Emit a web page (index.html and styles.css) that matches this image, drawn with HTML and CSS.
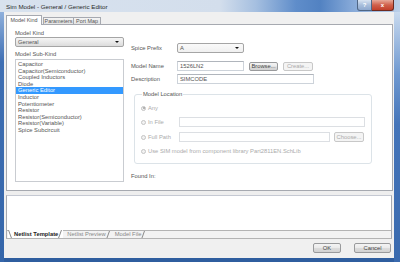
FILE: index.html
```html
<!DOCTYPE html>
<html lang="en">
<head>
    <meta charset="UTF-8">
    <meta name="viewport" content="width=device-width, initial-scale=1.0">
    <title>Sim Model - General / Generic Editor</title>
    <link rel="stylesheet" href="styles.css">
</head>
<body>
    <div class="window">
        <div class="titlebar">
            <span class="title">Sim Model - General / Generic Editor</span>
            <div class="caption">
                <span class="cap-help">?</span>
                <span class="cap-close">x</span>
            </div>
        </div>
        <div class="frame">
            <div class="client">
                <div class="tabs">
                    <span class="tab active">Model Kind</span>
                    <span class="tab tab-params">Parameters</span>
                    <span class="tab tab-ports">Port Map</span>
                </div>
                <div class="tab-panel">
                    <div class="kind-col">
                        <div class="label">Model Kind</div>
                        <div class="combo combo-kind"><span>General</span><span class="arrow"></span></div>
                        <div class="label sub-label">Model Sub-Kind</div>
                        <ul class="listbox">
                            <li>Capacitor</li>
                            <li>Capacitor(Semiconductor)</li>
                            <li>Coupled Inductors</li>
                            <li>Diode</li>
                            <li class="selected">Generic Editor</li>
                            <li>Inductor</li>
                            <li>Potentiometer</li>
                            <li>Resistor</li>
                            <li>Resistor(Semiconductor)</li>
                            <li>Resistor(Variable)</li>
                            <li>Spice Subcircuit</li>
                        </ul>
                    </div>
                    <div class="form-col">
                        <div class="row">
                            <span class="row-label">Spice Prefix</span>
                            <div class="combo combo-prefix"><span>A</span><span class="arrow"></span></div>
                        </div>
                        <div class="row row-name">
                            <span class="row-label">Model Name</span>
                            <div class="edit edit-name">1526LN2</div>
                            <div class="btn btn-browse">Browse...</div>
                            <div class="btn btn-create disabled">Create...</div>
                        </div>
                        <div class="row row-desc">
                            <span class="row-label">Description</span>
                            <div class="edit edit-desc">SIMCODE</div>
                        </div>
                        <fieldset class="group">
                            <legend>Model Location</legend>
                            <div class="opt opt-any"><span class="radio checked"></span>Any</div>
                            <div class="opt opt-file">
                                <span class="radio"></span><span class="opt-label">In File</span>
                                <div class="edit edit-off edit-grow"></div>
                            </div>
                            <div class="opt opt-path">
                                <span class="radio"></span><span class="opt-label">Full Path</span>
                                <div class="edit edit-off edit-grow"></div>
                                <div class="btn btn-choose disabled">Choose...</div>
                            </div>
                            <div class="opt opt-lib"><span class="radio"></span>Use SIM model from component library Part2811EN.SchLib</div>
                        </fieldset>
                        <div class="found">Found In:</div>
                    </div>
                </div>
                <div class="splitter"></div>
                <div class="netlist-panel">
                    <div class="netlist-area"></div>
                    <div class="sheet-tabs">
                        <span class="sheet-tab active">Netlist Template</span>
                        <span class="sheet-tab">Netlist Preview</span>
                        <span class="sheet-tab">Model File</span>
                    </div>
                </div>
                <div class="footer">
                    <div class="btn btn-ok">OK</div>
                    <div class="btn btn-cancel">Cancel</div>
                </div>
            </div>
        </div>
    </div>
</body>
</html>
```

FILE: styles.css
```css
body {
    margin: 0;
    font-family: "Liberation Sans", Arial, sans-serif;
    font-size: 5.8px;
    color: #555;
    background: #fff;
}
.window {
    width: 400px;
    height: 262px;
    display: flex;
    flex-direction: column;
    overflow: hidden;
}
.titlebar {
    height: 12px;
    display: flex;
    align-items: flex-start;
    background: linear-gradient(90deg, #d8e2ee 0%, #d3deec 55%, #a5bfe0 64%, #5f8dca 74%, #5282c2 80%, #86a9d8 88%, #bcd0e9 100%);
}
.title {
    margin: 3px 0 0 6px;
    line-height: 8px;
    font-size: 6.2px;
    color: #2a2a2a;
}
.caption {
    margin-left: auto;
    margin-right: 6px;
    display: flex;
    height: 11px;
}
.caption span {
    display: flex;
    align-items: center;
    justify-content: center;
    color: #fff;
    font-weight: bold;
    font-size: 6px;
    border: 1px solid #4f6685;
    border-top: none;
    box-sizing: border-box;
}
.cap-help {
    width: 15px;
    background: linear-gradient(#d9e4f2, #a9bfdc 50%, #8ea9cf);
    border-radius: 0 0 0 3px;
}
.cap-close {
    width: 22px;
    background: linear-gradient(#e7a999, #d0604c 50%, #c2402b);
    border-color: #6e2a20 !important;
    border-left: none !important;
    border-radius: 0 0 3px 0;
}
.frame {
    flex: 1;
    display: flex;
    padding: 0 6px 4px 4px;
    background:
        linear-gradient(#c9daef, #6e98d0 25%, #4474b9 45%, #3a6aae) right / 6px 100% no-repeat,
        linear-gradient(#8fb0dc, #3f6fb3 20%, #3566aa) left / 4px 100% no-repeat,
        #2f5e9f;
}
.client {
    flex: 1;
    display: flex;
    flex-direction: column;
    background: #f0f0f0;
}
.tabs {
    display: flex;
    height: 10px;
    margin: 3px 0 -1px 2px;
    position: relative;
    z-index: 1;
}
.tab {
    box-sizing: border-box;
    height: 7px;
    margin-top: 2px;
    border: 1px solid #a6a9b0;
    border-bottom: none;
    background: linear-gradient(#f4f4f4, #e4e4e4);
    line-height: 6px;
    text-align: center;
    font-size: 5.4px;
    color: #555;
    white-space: nowrap;
}
.tab.active {
    width: 36px;
    height: 10px;
    margin-top: 0;
    line-height: 9px;
    background: #fff;
}
.tab-params {
    width: 31px;
    margin-left: 1px;
}
.tab-ports {
    width: 27px;
    border-left: none;
}
.tab-panel {
    box-sizing: border-box;
    height: 167px;
    margin: 0 1px 0 2px;
    border: 1px solid #a6a9b0;
    background: #fff;
    display: flex;
    padding: 5px 0 0 8px;
}
.kind-col {
    width: 109px;
    display: flex;
    flex-direction: column;
}
.label {
    line-height: 7px;
}
.sub-label {
    margin-top: 4px;
}
.combo {
    box-sizing: border-box;
    height: 10px;
    border: 1px solid #a5a5a5;
    border-radius: 2px;
    display: flex;
    align-items: center;
    justify-content: space-between;
    padding: 0 4px 0 2px;
    background: linear-gradient(#f5f5f5, #e9e9e9 50%, #dcdcdc);
}
.combo-prefix {
    width: 67px;
    background: linear-gradient(#fafafa, #f0f0f0);
}
.arrow {
    width: 0;
    height: 0;
    border-left: 2px solid transparent;
    border-right: 2px solid transparent;
    border-top: 2px solid #111;
}
.listbox {
    box-sizing: border-box;
    height: 123px;
    margin: 1px 0 0 0;
    padding: 1px 0 0 0;
    list-style: none;
    border: 1px solid #c9ccd1;
}
.listbox li {
    line-height: 6.6px;
    height: 6.6px;
    padding-left: 2px;
    white-space: nowrap;
}
.listbox li.selected {
    background: #3399ff;
    color: #fff;
}
.form-col {
    margin-left: 7px;
    padding-top: 13px;
    display: flex;
    flex-direction: column;
}
.row {
    height: 10px;
    display: flex;
    align-items: center;
}
.row-name {
    margin-top: 8px;
}
.row-desc {
    margin-top: 3px;
}
.row-label {
    width: 46px;
}
.edit {
    box-sizing: border-box;
    height: 10px;
    border: 1px solid #cdd3da;
    border-top-color: #b0b5bc;
    background: #fff;
    line-height: 8px;
    padding-left: 2px;
}
.edit-name {
    width: 67px;
}
.edit-desc {
    width: 137px;
}
.edit-off {
    border-color: #dcdfe3;
}
.edit-grow {
    flex: 1;
}
.btn {
    box-sizing: border-box;
    height: 10px;
    border: 1px solid #999a9c;
    border-radius: 2px;
    background: linear-gradient(#f4f4f4, #ebebeb 45%, #dcdcdc 55%, #d2d2d2);
    display: flex;
    align-items: center;
    justify-content: center;
    color: #444;
}
.btn.disabled {
    border-color: #c8c8c8;
    background: #f4f4f4;
    color: #aaa;
}
.btn-browse {
    width: 29px;
    height: 9px;
    margin-left: 5px;
}
.btn-create {
    width: 30px;
    height: 9px;
    margin-left: 5px;
}
.group {
    box-sizing: border-box;
    width: 238px;
    min-width: 0;
    margin: 7px 0 0 3px;
    padding: 0 6px 7px 6px;
    border: 1px solid #dce3e8;
    border-radius: 3px;
}
.group legend {
    line-height: 7px;
    padding: 0 1px;
    margin-left: 1px;
}
.opt {
    height: 10px;
    display: flex;
    align-items: center;
    color: #ababab;
}
.opt-any {
    margin-top: 5px;
}
.opt-file {
    margin-top: 4px;
}
.opt-path {
    margin-top: 5px;
}
.opt-lib {
    margin-top: 4px;
    white-space: nowrap;
}
.radio {
    box-sizing: border-box;
    width: 5px;
    height: 5px;
    margin-right: 2px;
    border: 1px solid #c4c4c4;
    border-radius: 50%;
    background: #f2f2f2;
    display: flex;
    align-items: center;
    justify-content: center;
}
.radio.checked::after {
    content: '';
    width: 2px;
    height: 2px;
    border-radius: 50%;
    background: #a0a0a0;
}
.opt-label {
    width: 31px;
}
.btn-choose {
    width: 30px;
    margin-left: 4px;
    margin-right: 1px;
}
.found {
    margin-top: 9px;
    line-height: 7px;
}
.splitter {
    height: 4px;
    background: #eeeeee;
}
.netlist-panel {
    margin: 0 2px 0 2px;
    border: 1px solid #a6a9b0;
    border-top-color: #c5c9d3;
    border-bottom-color: #b4b4b4;
    display: flex;
    flex-direction: column;
}
.netlist-area {
    height: 34px;
    background: #fff;
}
.sheet-tabs {
    height: 7px;
    border-top: 1px solid #b4b4b4;
    background: #f3f3f3;
    display: flex;
    padding-left: 1px;
}
.sheet-tab {
    position: relative;
    height: 7px;
    line-height: 7px;
    padding: 0 5px 0 6px;
    margin-right: -2px;
    color: #888;
    white-space: nowrap;
}
.sheet-tab::before,
.sheet-tab::after {
    content: '';
    position: absolute;
    top: 0;
    bottom: 0;
    width: 0;
    transform-origin: top;
}
.sheet-tab::after {
    right: 1px;
    border-right: 1px solid #8a8a8a;
    transform: skewX(-20deg);
}
.sheet-tab.active {
    color: #222;
    font-weight: bold;
    background: #fff;
    margin-top: -1px;
    height: 8px;
    line-height: 9px;
}
.sheet-tab.active::before {
    left: 0;
    border-left: 1px solid #8a8a8a;
    transform: skewX(20deg);
}
.footer {
    flex: 1;
    display: flex;
    justify-content: flex-end;
    align-items: flex-start;
    padding: 4px 3px 0 0;
}
.btn-ok {
    width: 28px;
}
.btn-cancel {
    width: 37px;
    margin-left: 13px;
}
```
